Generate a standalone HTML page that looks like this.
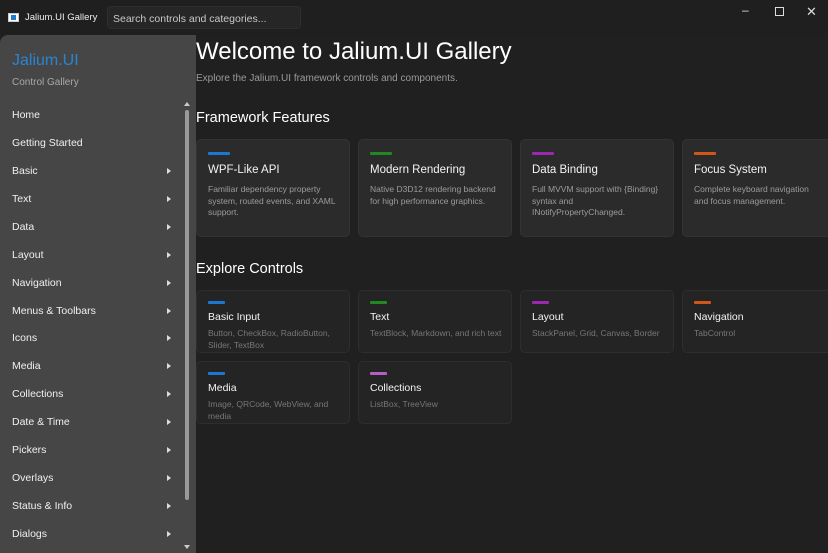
<!DOCTYPE html>
<html><head><meta charset="utf-8"><style>
*{margin:0;padding:0;box-sizing:border-box}
body{width:828px;height:553px;overflow:hidden;background:#202020;font-family:"Liberation Sans",sans-serif;color:#fff;position:relative}
.tb{position:absolute;left:0;top:0;width:828px;height:35px;background:#1f1f1f}
.logo{position:absolute;left:8px;top:13px;width:11px;height:9px;background:#fff;border:1px solid #ccc}
.logo:after{content:"";position:absolute;left:2px;top:1px;width:5px;height:5px;background:#1f7ad0}
.tt{position:absolute;left:25px;top:12px;font-size:9.5px;color:#eee}
.search{position:absolute;left:107px;top:6px;width:194px;height:23px;background:#262626;border:1px solid #2e2e2e;border-radius:4px;font-size:10.5px;color:#c8c8c8;padding:6px 0 0 5px}
.wc{position:absolute;top:6px;font-size:12px;color:#ddd}
.side{position:absolute;left:0;top:35px;width:196px;height:518px;background:#464646;border-top-left-radius:8px}
.brand{position:absolute;left:12px;top:52px;font-size:16px;color:#2a84d2}
.sub{position:absolute;left:12px;top:77px;font-size:10px;color:#a8a8a8}
.nav{position:absolute;left:12px;font-size:10.5px;color:#f0f0f0}
.arr{position:absolute;left:167px;width:0;height:0;border-left:4px solid #ddd;border-top:3px solid transparent;border-bottom:3px solid transparent}
.sb{position:absolute;left:185px;top:110px;width:4px;height:390px;background:#9a9a9a;border-radius:2px}
h1{position:absolute;left:196px;top:38px;font-size:24px;font-weight:normal}
.intro{position:absolute;left:196px;top:73px;font-size:10px;color:#9a9a9a}
h2{position:absolute;font-size:14.5px;font-weight:normal;left:196px}
.fc{position:absolute;top:139px;width:154px;height:98px;background:#2b2b2b;border:1px solid #333;border-radius:5px}
.bar{position:absolute;left:11px;width:22px;height:3px;border-radius:1px}
.ct{position:absolute;left:11px;font-size:11.5px;color:#f4f4f4}
.cd{position:absolute;left:11px;font-size:8.5px;color:#9c9c9c;line-height:11.5px;width:130px}
.cc{position:absolute;width:154px;height:63px;background:#242424;border:1px solid #2e2e2e;border-radius:5px}
.cc .cd{color:#777}
</style></head><body>
<div class="tb"><div class="logo"></div><div class="tt">Jalium.UI Gallery</div><div class="search">Search controls and categories...</div>
<div class="wc" style="left:742px;top:3px">&#8211;</div>
<div class="wc" style="left:775px;top:7px;width:9px;height:9px;border:1px solid #ddd"></div>
<div class="wc" style="left:806px;top:4px;font-size:13px">&#10005;</div></div>
<div class="side"></div>
<div class="brand">Jalium.UI</div><div class="sub">Control Gallery</div>
<div class="nav" style="top:109px">Home</div>
<div class="nav" style="top:137px">Getting Started</div>
<div class="nav" style="top:165px">Basic</div><div class="arr" style="top:168px"></div>
<div class="nav" style="top:193px">Text</div><div class="arr" style="top:196px"></div>
<div class="nav" style="top:221px">Data</div><div class="arr" style="top:224px"></div>
<div class="nav" style="top:249px">Layout</div><div class="arr" style="top:252px"></div>
<div class="nav" style="top:277px">Navigation</div><div class="arr" style="top:280px"></div>
<div class="nav" style="top:305px">Menus &amp; Toolbars</div><div class="arr" style="top:308px"></div>
<div class="nav" style="top:332px">Icons</div><div class="arr" style="top:335px"></div>
<div class="nav" style="top:360px">Media</div><div class="arr" style="top:363px"></div>
<div class="nav" style="top:388px">Collections</div><div class="arr" style="top:391px"></div>
<div class="nav" style="top:416px">Date &amp; Time</div><div class="arr" style="top:419px"></div>
<div class="nav" style="top:444px">Pickers</div><div class="arr" style="top:447px"></div>
<div class="nav" style="top:472px">Overlays</div><div class="arr" style="top:475px"></div>
<div class="nav" style="top:500px">Status &amp; Info</div><div class="arr" style="top:503px"></div>
<div class="nav" style="top:528px">Dialogs</div><div class="arr" style="top:531px"></div>
<div style="position:absolute;left:184px;top:102px;border-bottom:4px solid #ccc;border-left:3px solid transparent;border-right:3px solid transparent"></div>
<div class="sb"></div>
<div style="position:absolute;left:184px;top:545px;border-top:4px solid #ccc;border-left:3px solid transparent;border-right:3px solid transparent"></div>
<h1>Welcome to Jalium.UI Gallery</h1>
<div class="intro">Explore the Jalium.UI framework controls and components.</div>
<h2 style="top:110px">Framework Features</h2>
<div class="fc" style="left:196px"><div class="bar" style="top:12px;background:#1a78d0"></div><div class="ct" style="top:24px">WPF-Like API</div><div class="cd" style="top:44px">Familiar dependency property system, routed events, and XAML support.</div></div>
<div class="fc" style="left:358px"><div class="bar" style="top:12px;background:#1f8a1f"></div><div class="ct" style="top:24px">Modern Rendering</div><div class="cd" style="top:44px">Native D3D12 rendering backend for high performance graphics.</div></div>
<div class="fc" style="left:520px"><div class="bar" style="top:12px;background:#9c27b0"></div><div class="ct" style="top:24px">Data Binding</div><div class="cd" style="top:44px">Full MVVM support with {Binding} syntax and INotifyPropertyChanged.</div></div>
<div class="fc" style="left:682px;width:160px"><div class="bar" style="top:12px;background:#d0561c"></div><div class="ct" style="top:24px">Focus System</div><div class="cd" style="top:44px">Complete keyboard navigation and focus management.</div></div>
<h2 style="top:261px">Explore Controls</h2>
<div class="cc" style="left:196px;top:290px"><div class="bar" style="top:10px;width:17px;background:#1a78d0"></div><div class="ct" style="top:20px;font-size:10.5px">Basic Input</div><div class="cd" style="top:37px">Button, CheckBox, RadioButton, Slider, TextBox</div></div>
<div class="cc" style="left:358px;top:290px"><div class="bar" style="top:10px;width:17px;background:#1f8a1f"></div><div class="ct" style="top:20px;font-size:10.5px">Text</div><div class="cd" style="top:37px;width:140px">TextBlock, Markdown, and rich text</div></div>
<div class="cc" style="left:520px;top:290px"><div class="bar" style="top:10px;width:17px;background:#9c27b0"></div><div class="ct" style="top:20px;font-size:10.5px">Layout</div><div class="cd" style="top:37px;width:140px">StackPanel, Grid, Canvas, Border</div></div>
<div class="cc" style="left:682px;top:290px;width:160px"><div class="bar" style="top:10px;width:17px;background:#d0561c"></div><div class="ct" style="top:20px;font-size:10.5px">Navigation</div><div class="cd" style="top:37px">TabControl</div></div>
<div class="cc" style="left:196px;top:361px"><div class="bar" style="top:10px;width:17px;background:#1a78d0"></div><div class="ct" style="top:20px;font-size:10.5px">Media</div><div class="cd" style="top:37px">Image, QRCode, WebView, and media</div></div>
<div class="cc" style="left:358px;top:361px"><div class="bar" style="top:10px;width:17px;background:#b45cc8"></div><div class="ct" style="top:20px;font-size:10.5px">Collections</div><div class="cd" style="top:37px">ListBox, TreeView</div></div>
</body></html>
